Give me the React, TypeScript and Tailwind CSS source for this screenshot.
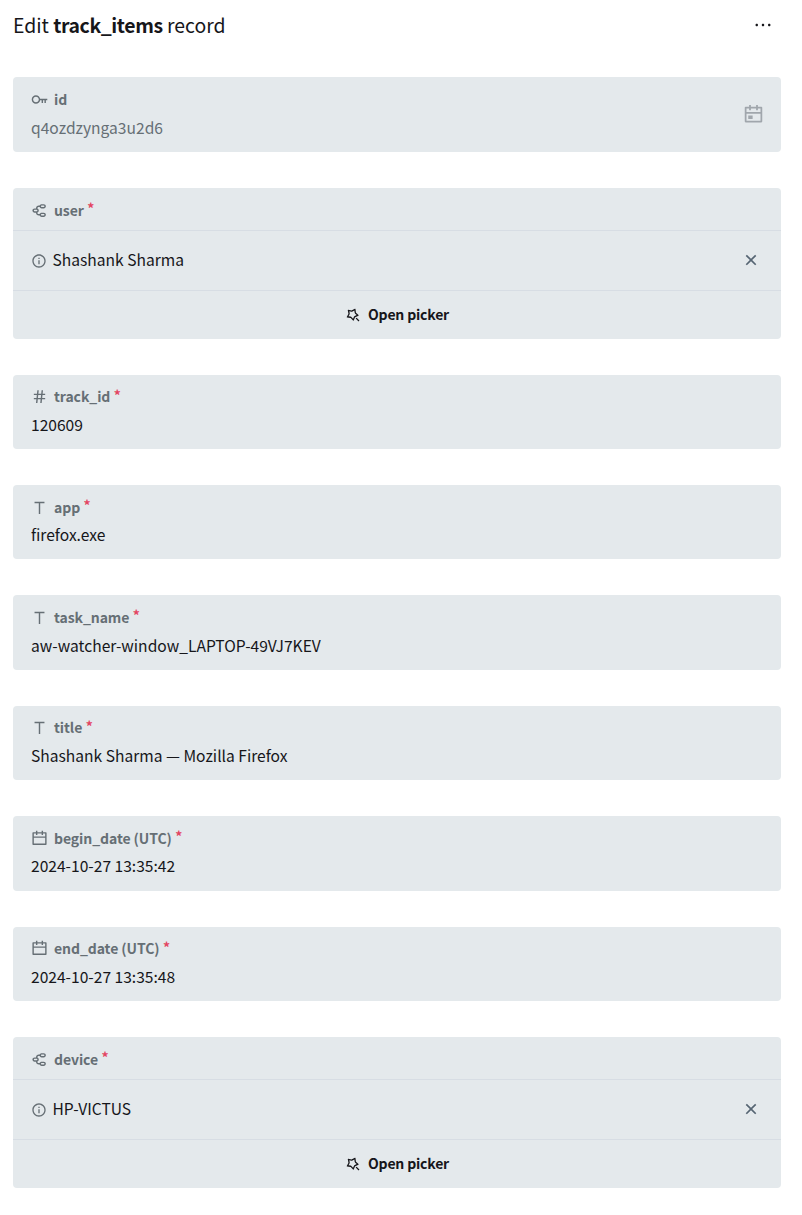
import React from 'react';
import { RiKeyLine, RiMindMap, RiHashtag, RiText, RiCalendarLine, RiCalendarEventLine, RiInformationLine, RiCloseLine, RiMagicLine, RiMoreLine } from 'react-icons/ri';
import type { IconType } from 'react-icons';

function Label({ icon: Icon, text, required = true }: { icon: IconType; text: string; required?: boolean }) {
  return (
    <div className="flex h-[18px] items-center text-[14px] leading-[18px] font-bold tracking-[-0.08px] text-[#666f75]">
      <Icon className="mt-px mr-[6px] size-[17px] shrink-0" />
      <span>{text}</span>
      {required && <span className="ml-[3.5px] -mt-[3px] text-[#e34562]">*</span>}
    </div>
  );
}

function Field({ icon, text, value }: { icon: IconType; text: string; value: string }) {
  return (
    <div className="h-[74.41px] rounded bg-[#e4e9ec] px-[18px] pt-[12.6px]">
      <Label icon={icon} text={text} />
      <div className="mt-[6.7px] text-[15.6px] leading-6">{value}</div>
    </div>
  );
}

function Relation({ text, value }: { text: string; value: string }) {
  return (
    <div className="h-[150.58px] overflow-hidden rounded bg-[#e4e9ec]">
      <div className="h-[42px] px-[18px] pt-[12.5px]"><Label icon={RiMindMap} text={text} /></div>
      <div className="flex h-[61px] items-center border-y border-[#d7dde4] pr-5 pl-[18px]">
        <RiInformationLine className="mr-[5.5px] size-4 text-[#666f75]" />
        <span className="-mt-[2.4px] grow text-[15.6px] leading-6">{value}</span>
        <RiCloseLine className="-mt-px size-5 text-[#566573]" />
      </div>
      <button className="flex h-[47px] w-full items-center justify-center gap-[7px] text-[14px] font-bold tracking-[-0.18px]">
        <RiMagicLine className="size-4" />
        <span>Open picker</span>
      </button>
    </div>
  );
}

export default function App() {
  return (
    <main className="h-[1215px] bg-white pl-[13px] pr-[21px] font-['Noto_Sans_CJK_SC','Noto_Sans',sans-serif] text-[#16161a]">
      <header className="flex h-[77px] items-start justify-between pt-[10px]">
        <h1 className="text-[19.4px] leading-[30px]">Edit <strong className="tracking-[-0.38px]">track_items</strong> record</h1>
        <RiMoreLine className="mr-2 mt-[5px] size-5" />
      </header>
      <div className="flex flex-col gap-9">
        <div className="flex h-[75px] items-start justify-between rounded bg-[#e4e9ec] pt-[13px] pr-[17px] pl-[18px]">
          <div>
            <Label icon={RiKeyLine} text="id" required={false} />
            <div className="mt-[7px] text-[15.6px] leading-6 text-[#666f75]">q4ozdzynga3u2d6</div>
          </div>
          <RiCalendarEventLine className="mt-[14px] size-[21px] text-[#a0a6ac]" />
        </div>
        <Relation text="user" value="Shashank Sharma" />
        <Field icon={RiHashtag} text="track_id" value="120609" />
        <Field icon={RiText} text="app" value="firefox.exe" />
        <Field icon={RiText} text="task_name" value="aw-watcher-window_LAPTOP-49VJ7KEV" />
        <Field icon={RiText} text="title" value="Shashank Sharma — Mozilla Firefox" />
        <Field icon={RiCalendarLine} text="begin_date (UTC)" value="2024-10-27 13:35:42" />
        <Field icon={RiCalendarLine} text="end_date (UTC)" value="2024-10-27 13:35:48" />
        <Relation text="device" value="HP-VICTUS" />
      </div>
    </main>
  );
}
